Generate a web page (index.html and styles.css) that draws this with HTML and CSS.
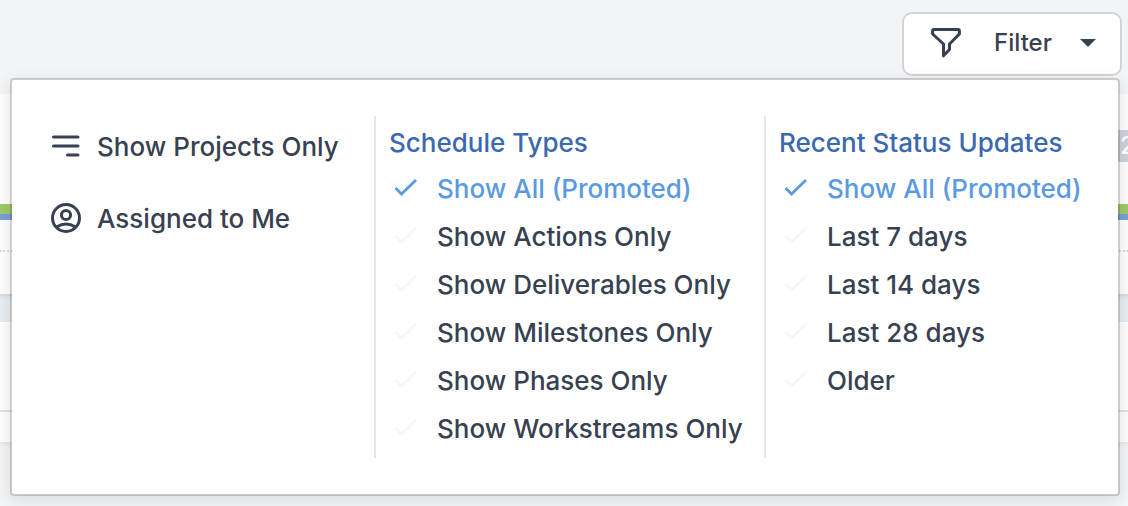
FILE: index.html
```
<!DOCTYPE html>
<html lang="en">
<head>
    <meta charset="UTF-8">
    <meta name="viewport" content="width=device-width, initial-scale=1.0">
    <title>Schedule Filter</title>
    <link rel="stylesheet" href="styles.css">
</head>
<body>
    <!-- Shared icon -->
    <svg class="sprite" aria-hidden="true">
        <symbol id="check" viewBox="0 0 24 24">
            <path d="M1.5 12 L7.5 18 L22 4" fill="none" stroke="currentColor" stroke-width="2.8"/>
        </symbol>
    </svg>

    <header class="toolbar">
        <button class="filter-button" type="button" aria-haspopup="true" aria-expanded="true">
            <svg class="icon-funnel" viewBox="0 0 32 32" aria-hidden="true">
                <path d="M4 3.5 H28 Q29.4 3.5 29.4 5 V8 L19.5 18 V23.5 L13.5 29.8 V18 L2.6 8 V5 Q2.6 3.5 4 3.5 Z" fill="none" stroke="currentColor" stroke-width="3" stroke-linejoin="round"/>
            </svg>
            <span>Filter</span>
            <svg class="icon-caret" viewBox="0 0 16 8" aria-hidden="true">
                <path d="M0 0 H16 L8 8 Z" fill="currentColor"/>
            </svg>
        </button>
    </header>

    <main class="timeline">
        <section class="card">
            <div class="card-top"><span class="badge">2</span></div>
            <div class="bar"></div>
            <div class="dotted"></div>
        </section>
        <section class="card card-second">
            <div class="rule"></div>
        </section>
    </main>

    <div class="filter-menu">
        <div class="column quick">
            <button class="quick-item" type="button">
                <svg class="quick-icon" viewBox="0 0 32 32" aria-hidden="true">
                    <path d="M3.5 7 H28 M3.5 16 H28 M17.5 25 H28" fill="none" stroke="currentColor" stroke-width="3" stroke-linecap="round"/>
                </svg>
                <span>Show Projects Only</span>
            </button>
            <button class="quick-item" type="button">
                <svg class="quick-icon" viewBox="0 0 32 32" aria-hidden="true">
                    <g fill="none" stroke="currentColor" stroke-width="3">
                        <circle cx="16" cy="16" r="13.5"/>
                        <circle cx="16" cy="13" r="4.6"/>
                        <path d="M6.5 25 Q16 19 25.5 25"/>
                    </g>
                </svg>
                <span>Assigned to Me</span>
            </button>
        </div>

        <div class="column">
            <h2>Schedule Types</h2>
            <button class="option selected" type="button"><svg class="check"><use href="#check"/></svg>Show All (Promoted)</button>
            <button class="option" type="button"><svg class="check"><use href="#check"/></svg>Show Actions Only</button>
            <button class="option" type="button"><svg class="check"><use href="#check"/></svg>Show Deliverables Only</button>
            <button class="option" type="button"><svg class="check"><use href="#check"/></svg>Show Milestones Only</button>
            <button class="option" type="button"><svg class="check"><use href="#check"/></svg>Show Phases Only</button>
            <button class="option" type="button"><svg class="check"><use href="#check"/></svg>Show Workstreams Only</button>
        </div>

        <div class="column">
            <h2>Recent Status Updates</h2>
            <button class="option selected" type="button"><svg class="check"><use href="#check"/></svg>Show All (Promoted)</button>
            <button class="option" type="button"><svg class="check"><use href="#check"/></svg>Last 7 days</button>
            <button class="option" type="button"><svg class="check"><use href="#check"/></svg>Last 14 days</button>
            <button class="option" type="button"><svg class="check"><use href="#check"/></svg>Last 28 days</button>
            <button class="option" type="button"><svg class="check"><use href="#check"/></svg>Older</button>
        </div>
    </div>
</body>
</html>
```
FILE: styles.css
```
* {
    box-sizing: border-box;
}

body {
    margin: 0;
    min-height: 100vh;
    position: relative;
    overflow: hidden;
    background: #f3f4f6;
    color: #374151;
    font-family: Inter, "Liberation Sans", sans-serif;
    font-size: 26px;
    font-weight: 500;
}

button {
    font: inherit;
    color: inherit;
    background: none;
    border: none;
    padding: 0;
    text-align: left;
    cursor: pointer;
}

.sprite {
    display: none;
}

/* Toolbar */
.toolbar {
    display: flex;
    justify-content: flex-end;
    height: 94px;
    padding: 12px 6px 0 0;
}

.filter-button {
    display: flex;
    align-items: center;
    height: 64px;
    padding: 0 24px 4px 26px;
    background: #fff;
    border: 2px solid #d1d5db;
    border-radius: 10px;
    font-size: 24px;
}

.icon-funnel {
    width: 32px;
    height: 32px;
    margin-right: 32px;
}

.icon-caret {
    width: 16px;
    height: 8px;
    margin: 2px 0 0 28px;
}

/* Timeline behind the menu */
.timeline {
    background: #e8edf2;
}

.card {
    height: 202px;
    margin-bottom: 26px;
    background: #fdfdfd;
    border-bottom: 2px solid #d8dbe1;
    box-shadow: 0 2px 4px rgba(0, 0, 0, 0.06);
}

.card-top {
    display: flex;
    justify-content: flex-end;
    height: 110px;
    padding-top: 36px;
}

.badge {
    width: 20px;
    height: 32px;
    padding-left: 12px;
    background: #cdd1da;
    color: #fff;
    font-size: 24px;
    line-height: 32px;
    overflow: hidden;
}

.bar {
    height: 16px;
    background: #9dca68;
    border-bottom: 6px solid #76a1d8;
}

.dotted {
    margin-top: 30px;
    border-top: 2px dotted #dcdcde;
}

.card-second {
    height: 120px;
    margin: 0;
    padding-top: 88px;
    border: none;
    box-shadow: 0 2px 6px rgba(0, 0, 0, 0.08);
}

.rule {
    height: 2px;
    background: #dfe0e4;
}

/* Filter menu */
.filter-menu {
    position: absolute;
    top: 78px;
    left: 10px;
    right: 8px;
    display: grid;
    grid-template-columns: 362fr 390fr 354fr;
    padding: 36px 0;
    background: #fff;
    border: 2px solid rgba(0, 0, 0, 0.16);
    background-clip: padding-box;
    border-radius: 4px;
    box-shadow: 0 4px 16px rgba(0, 0, 0, 0.1);
}

.column {
    display: flex;
    flex-direction: column;
    padding: 5px 0 6px 13px;
}

.column + .column {
    border-left: 2px solid #e4e6eb;
}

.column h2 {
    margin: 0;
    font-size: 26px;
    font-weight: 500;
    line-height: 43px;
    color: #3b69ad;
}

.quick {
    gap: 24px;
    padding: 6px 0 0 38px;
}

.quick-item {
    display: flex;
    align-items: center;
    gap: 15px;
    height: 48px;
}

.quick-icon {
    width: 32px;
    height: 32px;
}

.option {
    display: flex;
    align-items: center;
    gap: 19px;
    height: 48px;
    padding-left: 5px;
}

.check {
    width: 24px;
    height: 24px;
    color: #f6f7f8;
}

.option.selected,
.selected .check {
    color: #5a9ae0;
}
```
